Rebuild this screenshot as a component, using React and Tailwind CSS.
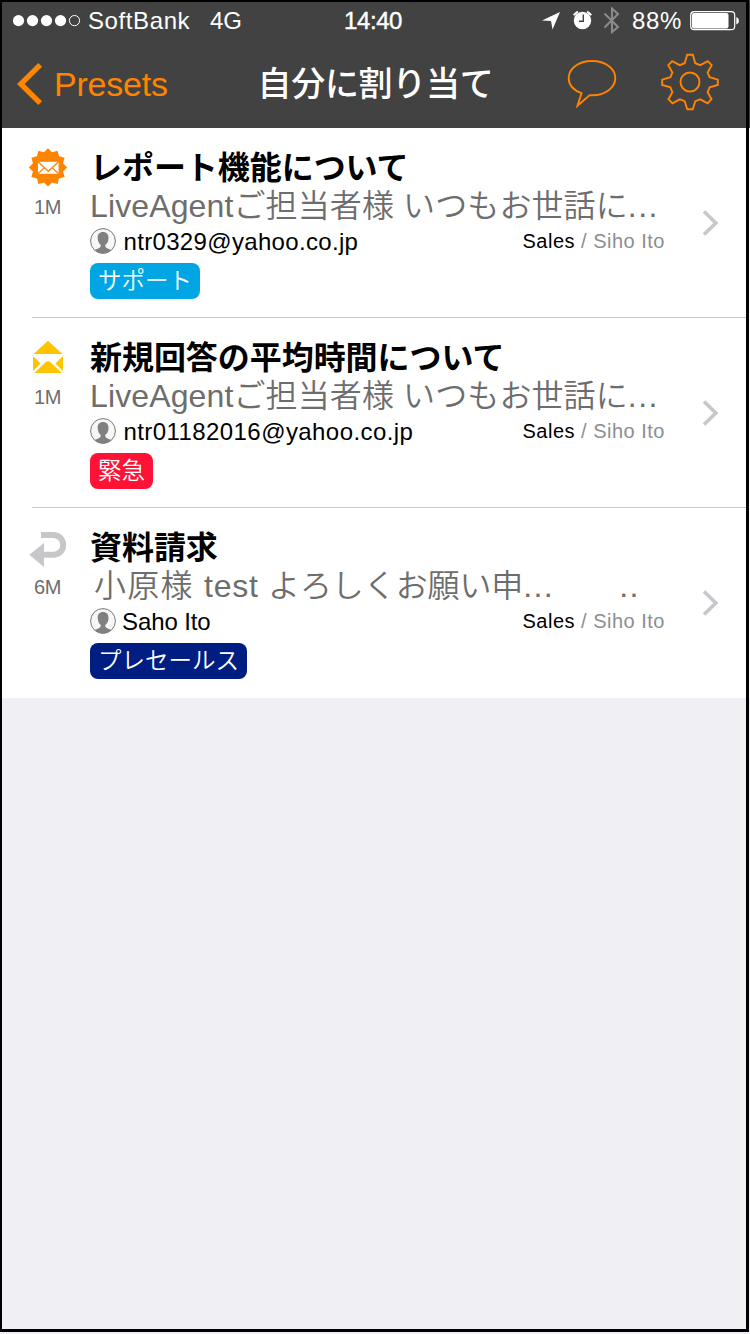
const FONT = "font-['Liberation_Sans','Noto_Sans_CJK_JP',sans-serif]";

function StatusBar() {
  return (
    <div className="flex h-[38px] items-center pl-[11px] text-[24px] leading-[38px] text-white">
      <svg className="mr-[7px] shrink-0" width="68" height="12" viewBox="0 0 68 12" fill="#fff">
        <circle cx="5.5" cy="5.6" r="5.6" />
        <circle cx="19.5" cy="5.6" r="5.6" />
        <circle cx="33.5" cy="5.6" r="5.6" />
        <circle cx="47.5" cy="5.6" r="5.6" />
        <circle cx="61.5" cy="5.6" r="5.1" fill="none" stroke="#fff" strokeWidth="1" />
      </svg>
      <span className="w-[122px] tracking-[0.6px]">SoftBank</span>
      <span className="w-[134px]">4G</span>
      <span className="w-[197px] tracking-[-0.4px] [-webkit-text-stroke:0.4px_white]">14:40</span>
      <svg className="shrink-0" width="78" height="28" viewBox="541 7 78 28">
        <path d="M560 12 L542 20.5 L551 21 L552.5 29.5 Z" fill="#fff" />
        <circle cx="582.5" cy="20.5" r="8.7" fill="#fff" />
        <path d="M573.8 15.3 A11 11 0 0 1 578 11.6 M591.2 15.3 A11 11 0 0 0 587 11.6" stroke="#fff" strokeWidth="2" fill="none" />
        <path d="M583.3 14.5 V21.3 H579" stroke="#424242" strokeWidth="1.4" fill="none" />
        <path d="M604.5 13.5 L618 27 L612 32 V8.5 L618 14 L604.5 27.5" stroke="#8b8b8b" strokeWidth="2" fill="none" />
      </svg>
      <span className="ml-[13px] w-[58px] tracking-[0.7px]">88%</span>
      <svg className="shrink-0" width="50" height="20" viewBox="0 0 50 20">
        <rect x="0.7" y="0.7" width="44" height="18" rx="3.5" fill="none" stroke="#fff" strokeWidth="1.2" />
        <rect x="2" y="2" width="36.5" height="15.5" rx="2" fill="#fff" />
        <path d="M46.3 6 Q49 7 49 9.7 Q49 12.5 46.3 13.5 Z" fill="#fff" />
      </svg>
    </div>
  );
}

function NavBar() {
  return (
    <div className="flex h-[88px] items-center pl-[15px] text-[#ff8400]">
      <svg className="shrink-0" width="26" height="44" viewBox="0 0 26 44" fill="none">
        <path d="M23.2 2.8 L3.8 22 L23.2 41.2" stroke="#ff8400" strokeWidth="5.4" />
      </svg>
      <span className="ml-[11px] w-[203.5px] text-[34px] leading-[44px] tracking-[-0.2px]">Presets</span>
      <h1 className="w-[309.5px] text-[34px] leading-[44px] font-medium tracking-[-0.3px] text-white">自分に割り当て</h1>
      <svg className="mb-[3px] shrink-0" width="50" height="50" viewBox="0 0 50 50" fill="none" stroke="#ff8400" strokeWidth="1.9">
        <path d="M15 35.2 C7 32.2 2.2 26.5 2.2 20 C2.2 10.5 12 3 25.5 3 C39 3 48.8 10.5 48.8 20 C48.8 29.5 39 37.2 25.5 37.2 L23.2 37.1 L11 47.8 Z" transform="translate(-0.5 0)" />
      </svg>
      <svg className="mb-[4px] ml-[44px] shrink-0" width="58" height="58" viewBox="661 53 58 58" fill="none" stroke="#ff8400" strokeWidth="1.9">
        <path d="M687.2 54.8 H692.8 L695.3 63.2 L700.2 65.2 L707.8 61.2 L711.7 65.1 L707.6 72.5 L709.6 77.2 L717.8 79.6 V85 L709.6 87.3 L707.6 92.2 L711.5 99.2 L707.6 103.3 L700.2 99.3 L695.3 101.2 L692.8 109.2 H687.2 L684.7 101.2 L679.8 99.3 L672.4 103.3 L668.5 99.2 L672.4 92.2 L670.4 87.3 L662.2 85 V79.6 L670.4 77.2 L672.4 72.5 L668.3 65.1 L672.2 61.2 L679.8 65.2 L684.7 63.2 Z" />
        <circle cx="690" cy="82" r="9.5" />
      </svg>
    </div>
  );
}

function NewIcon() {
  const points = Array.from({ length: 24 }, (_, i) => {
    const r = i % 2 ? 15.6 : 19.2;
    const a = (i * Math.PI) / 12;
    return `${20 + r * Math.sin(a)},${20.4 - r * Math.cos(a)}`;
  }).join(" ");
  return (
    <svg width="40" height="40" viewBox="0 0 40 40">
      <polygon points={points} fill="#ff8400" />
      <rect x="10" y="14.8" width="20.6" height="12" fill="#fff" />
      <path d="M10 14.8 L20.3 24.3 L30.6 14.8 M10 26.8 L16.2 20.9 M30.6 26.8 L24.4 20.9" stroke="#ff8400" strokeWidth="1.3" fill="none" />
    </svg>
  );
}

function OpenIcon() {
  return (
    <svg width="40" height="40" viewBox="28 147 40 40" fill="#ffc400">
      <path d="M48 150.8 L62.4 164 H33.6 Z" />
      <path d="M33 166 L40.6 173.5 L33 181 Z M63 166 L55.4 173.5 L63 181 Z" />
      <path d="M34.2 183 L45.6 172.3 Q48 170.4 50.4 172.3 L61.8 183 Z" />
    </svg>
  );
}

function ReplyIcon() {
  return (
    <svg width="40" height="40" viewBox="28 147 40 40">
      <path d="M41 155 H53.3 A9.8 9.8 0 0 1 53.3 174.8 H43" fill="none" stroke="#c7c7c9" strokeWidth="6" />
      <path d="M29.3 174.8 L44 163 V187 Z" fill="#c7c7c9" />
    </svg>
  );
}

function Avatar() {
  return (
    <svg className="mb-[2px] shrink-0" width="26" height="26" viewBox="0 0 26 26">
      <circle cx="13" cy="13" r="12.4" fill="#f7f7f7" stroke="#777" strokeWidth="1" />
      <path d="M13 4 C9.3 4 7.4 6.6 7.7 10.2 C7.9 13.5 9.3 15.8 10.8 17 C10.8 20.3 8.5 20.3 4.5 22 A12.4 12.4 0 0 0 21.5 22 C17.5 20.3 15.2 20.3 15.2 17 C17.4 15.4 18.4 13.5 18.5 10.2 C18.7 6.6 16.7 4 13 4 Z" fill="#808080" />
    </svg>
  );
}

function Ticket({ Icon, age, title, preview, previewClass, rest, name, nameClass, tag, tagClass, last }) {
  return (
    <li className="relative flex h-[190px] bg-white">
      <div className="flex w-[88px] shrink-0 flex-col items-center pt-[19px] pl-[4px]">
        <Icon />
        <span className="mt-[8px] -ml-[1px] text-[20px] leading-[24px] tracking-[-0.5px] text-[#6d6d6d]">{age}</span>
      </div>
      <div className="w-[575px] shrink-0 pt-[21px]">
        <h2 className="text-[32px] leading-[38px] font-bold tracking-[-0.05px] whitespace-nowrap text-black">{title}</h2>
        <p className={`mb-px flex text-[32px] leading-[38px] font-[350] whitespace-pre text-[#6d6d6d] ${previewClass}`}>
          {preview}
          <span className="tracking-[1.4px]">...</span>
          {rest}
        </p>
        <div className="flex h-[32px] items-center leading-[32px]">
          <Avatar />
          <span className={`flex-1 text-[24px] text-black ${nameClass}`}>{name}</span>
          <span className="mb-[2px] text-[20px] tracking-[0.5px] text-[#8e8e8e]">
            <span className="text-black">Sales</span> / Siho Ito
          </span>
        </div>
        <span className={`mt-[5px] inline-block h-[36px] rounded-[8px] px-[8px] text-[23.5px] leading-[37px] font-[350] text-white ${tagClass}`}>
          {tag}
        </span>
      </div>
      <svg className="mt-[81px] ml-[36px] shrink-0" width="20" height="28" viewBox="0 0 20 28" fill="none">
        <path d="M3 2.5 L14.8 14 L3 25.5" stroke="#c7c7cc" strokeWidth="3.6" />
      </svg>
      {!last && <div className="absolute right-0 bottom-0 left-[30px] h-px bg-[#c8c7cc]" />}
    </li>
  );
}

export default function App() {
  return (
    <div className={`h-[1334px] w-[750px] bg-[linear-gradient(#424242_128px,#ffffff_128px,#ffffff_698px,#efeff4_698px)] pr-px pb-[2px] ${FONT}`}>
      <main className="flex h-[1332px] flex-col overflow-hidden border-t-2 border-r-[3px] border-b-[3px] border-l-2 border-black bg-[#efeff4]">
        <header className="h-[126px] shrink-0 bg-[#424242]">
          <StatusBar />
          <NavBar />
        </header>
        <ul>
          <Ticket
            Icon={NewIcon}
            age="1M"
            title="レポート機能について"
            preview="LiveAgentご担当者様 いつもお世話に"
            previewClass="tracking-[0.12px]"
            name="ntr0329@yahoo.co.jp"
            nameClass="pl-[7.5px] tracking-[0.33px]"
            tag="サポート"
            tagClass="bg-[#00a5e3]"
          />
          <Ticket
            Icon={OpenIcon}
            age="1M"
            title="新規回答の平均時間について"
            preview="LiveAgentご担当者様 いつもお世話に"
            previewClass="tracking-[0.12px]"
            name="ntr01182016@yahoo.co.jp"
            nameClass="pl-[7.5px] tracking-[0.42px]"
            tag="緊急"
            tagClass="bg-[#ff1235]"
          />
          <Ticket
            Icon={ReplyIcon}
            age="6M"
            title="資料請求"
            preview={
              <>
                <span className="tracking-[1.3px]">小原様 </span>
                <span className="tracking-[0.7px]">test </span>
                <span className="tracking-[-0.1px]">よろしくお願い申</span>
              </>
            }
            previewClass="pl-[4px]"
            rest={<span className="ml-[65px] tracking-[1.4px]">..</span>}
            name="Saho Ito"
            nameClass="pl-[6px] tracking-[-0.1px]"
            tag="プレセールス"
            tagClass="bg-[#001e82]"
            last
          />
        </ul>
      </main>
    </div>
  );
}
